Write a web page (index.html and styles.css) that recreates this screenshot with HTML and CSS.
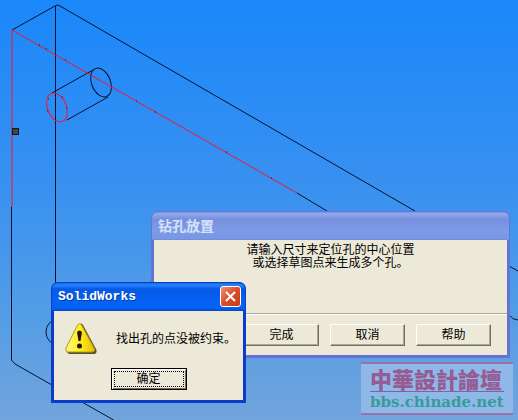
FILE: index.html
```html
<!DOCTYPE html>
<html lang="zh-CN">

<head>
    <meta charset="UTF-8">
    <meta name="viewport" content="width=device-width, initial-scale=1.0">
    <title>SolidWorks</title>
    <link rel="stylesheet" href="styles.css">
</head>

<body>
    <main class="desktop">
        <svg class="model" width="518" height="420" viewBox="0 0 518 420" aria-hidden="true">
            <g class="edges">
                <path d="M12 30L55 6Q57 4 60 6L415 211" />
                <path d="M55.500 6V300" class="sharp" />
                <path d="M11.500 207V360" class="sharp" />
                <path d="M297 193L327 211" />
                <path d="M11.500 360L15 364L140 435" />
                <path d="M509 266L518 271M509 315Q513 320 518 320" />
                <path d="M52 93L93 70M67 120L108 97" />
                <ellipse cx="101" cy="82.500" rx="9.500" ry="15" transform="rotate(-22 101 82.500)" />
                <ellipse cx="56" cy="332" rx="10" ry="12" />
            </g>
            <g class="picked">
                <path d="M12 30V207" />
                <path d="M12 30L297 193" />
                <ellipse cx="57" cy="107.500" rx="9.500" ry="15" transform="rotate(-22 57 107.500)" />
            </g>
            <path class="dots" d="M39 45h1M46 49h1M65 60h1M136 101h1M155 112h1M226 152h1M271 178h1M48 99h1M47 111h1M66 108h1M62 97h1" />
            <rect class="handle" x="12.500" y="128.500" width="6" height="6" />
        </svg>

        <section class="window placement" aria-label="钻孔放置">
            <header class="titlebar">
                <h2>钻孔放置</h2>
            </header>
            <div class="window-body">
                <p class="hint">请输入尺寸来定位孔的中心位置<br>或选择草图点来生成多个孔。</p>
                <div class="actions">
                    <button type="button">完成</button>
                    <button type="button">取消</button>
                    <button type="button">帮助</button>
                </div>
            </div>
        </section>

        <aside class="stamp">
            <div class="stamp-text">
                <strong>中華設計論壇</strong>
                <span>bbs.chinade.net</span>
            </div>
        </aside>

        <section class="window alert" role="alertdialog" aria-label="SolidWorks">
            <header class="titlebar">
                <h1>SolidWorks</h1>
                <button type="button" class="close" aria-label="关闭">
                    <svg width="19" height="19" viewBox="0 0 19 19">
                        <path d="M5 5L14 14M14 5L5 14" />
                    </svg>
                </button>
            </header>
            <div class="window-body">
                <div class="message">
                    <svg width="32" height="33" viewBox="0 0 32 33" aria-hidden="true">
                        <defs>
                            <linearGradient id="warn" x1="0" x2="1">
                                <stop offset="0" stop-color="#fff68a" />
                                <stop offset=".5" stop-color="#ffed1c" />
                                <stop offset="1" stop-color="#e8bd00" />
                            </linearGradient>
                        </defs>
                        <path d="M14 3Q16 0 18 3L31 27Q33 32 28 32H5Q1 32 3 28Z" fill="#55502f" />
                        <path d="M12.500 3Q14.500 0 16.500 3L29 26Q31 30 26 30H3Q0 30 1 26Z" fill="url(#warn)" stroke="#b69a17" />
                        <path d="M12 10Q14.500 7 17 10L15.500 19H13.500Z" fill="#241500" />
                        <circle cx="14.500" cy="24" r="2.500" fill="#241500" />
                    </svg>
                    <p>找出孔的点没被约束。</p>
                </div>
                <button type="button" class="ok"><span>确定</span></button>
            </div>
        </section>
    </main>
</body>

</html>
```

FILE: styles.css
```css
* {
    box-sizing: border-box;
}

body {
    margin: 0;
    font-family: "Liberation Sans", "Noto Sans CJK SC", sans-serif;
    font-size: 12px;
    color: #000;
}

h1,
h2,
p {
    margin: 0;
}

.desktop {
    position: relative;
    min-height: 100vh;
    overflow: hidden;
    background: linear-gradient(#1a87fa, #3991f0 45%, #539de5 75%, #72a4dc);
}

/* wireframe model */
.model {
    display: block;
}

.edges,
.picked {
    fill: none;
    stroke: #051230;
    stroke-width: 1;
}

.picked {
    stroke: #f0182f;
}

.sharp {
    shape-rendering: crispEdges;
}

.dots {
    stroke: #201038;
    stroke-width: 1;
}

.handle {
    fill: #444;
    stroke: #10151d;
}

/* windows */
.window {
    position: absolute;
    display: flex;
    flex-direction: column;
    border-radius: 7px 7px 0 0;
    padding: 0 3px 3px;
}

.titlebar {
    display: flex;
    align-items: center;
    justify-content: space-between;
    height: 29px;
    padding: 0 2px 0 4px;
}

.window-body {
    flex: 1;
    background: #ece9d8;
}

.window button {
    padding: 0;
    font: inherit;
    line-height: 16px;
    color: #000;
    background: #ece9d8;
}

.placement {
    left: 151px;
    top: 211px;
    width: 359px;
    height: 147px;
    background: linear-gradient(#7189dc, #91a9ed 3px, #788fdd 8px, #7c9ce6 20px, #7997e4 28px, #6670d3 30px, #6670d3);
    box-shadow: inset 0 0 0 1px #6575d4;
}

.placement h2 {
    font-size: 14px;
    line-height: 20px;
    color: #d5e2fa;
}

.placement .window-body {
    display: flex;
    flex-direction: column;
    justify-content: space-between;
}

.hint {
    padding-top: 4px;
    text-align: center;
    line-height: 13px;
}

.actions {
    display: flex;
    justify-content: flex-end;
    gap: 11px;
    padding: 10px 16px 9px;
    border-top: 1px solid #aca899;
    box-shadow: inset 0 1px #fff;
}

.actions button {
    width: 75px;
    height: 22px;
    border: 1px solid;
    border-color: #fff #716f64 #716f64 #fff;
    box-shadow: inset -1px -1px #aca899;
}

.alert {
    left: 51px;
    top: 282px;
    width: 195px;
    height: 121px;
    background: linear-gradient(#0753d5, #2785ff 3px, #0659e5 7px, #0562f4 20px, #0562f4 26px, #0445cc 29px, #0c39c9 31px);
    box-shadow: inset 0 0 0 1px #0841c8;
}

.alert h1 {
    font: bold 13px/20px "Liberation Mono", monospace;
    color: #fff;
    text-shadow: 1px 1px #0839a0;
}

.window .close {
    display: flex;
    width: 21px;
    height: 21px;
    border: 1px solid #fff;
    border-radius: 3px;
    background: linear-gradient(135deg, #ef9275, #dc4b27 50%, #c63b17);
}

.close path {
    stroke: #fff;
    stroke-width: 2;
}

.alert .window-body {
    display: flex;
    flex-direction: column;
    align-items: center;
    justify-content: space-between;
    padding: 11px 0 10px;
}

.message {
    display: flex;
    align-items: center;
    align-self: stretch;
    gap: 19px;
    padding-left: 11px;
    line-height: 16px;
    white-space: nowrap;
}

.window .ok {
    width: 76px;
    height: 22px;
    padding: 2px;
    border: 1px solid #000;
    box-shadow: inset 1px 1px #fff, inset -1px -1px #716f64;
}

.ok span {
    display: block;
    border: 1px dotted #000;
    line-height: 14px;
}

/* forum watermark */
.stamp {
    position: absolute;
    left: 361px;
    top: 362px;
    width: 152px;
    height: 53px;
    padding: 3px 9px;
    border: solid #9c71aa;
    border-width: 2px 0;
    background: #8fb8e8;
}

.stamp-text {
    display: flex;
    flex-direction: column;
    white-space: nowrap;
}

.stamp strong {
    padding-bottom: 2px;
    border-bottom: 1px solid #80649f;
    font: 900 22px/22px "Noto Sans CJK TC", sans-serif;
    color: #965c94;
}

.stamp span {
    font: bold 15px/20px "DejaVu Serif", serif;
    color: #379c98;
}
```
